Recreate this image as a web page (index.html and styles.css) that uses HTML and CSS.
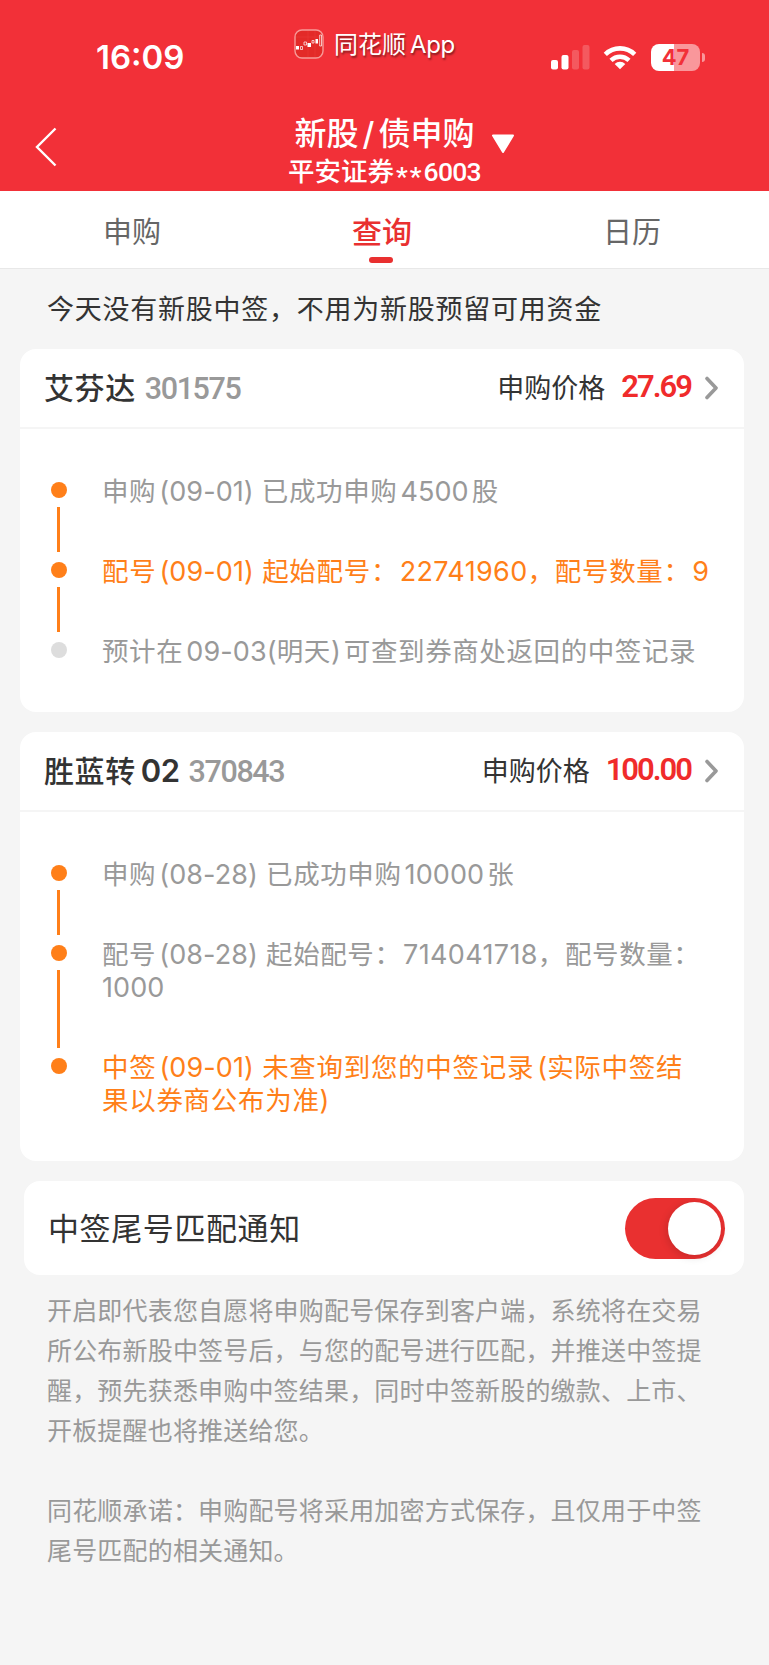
FILE: index.html
```html
<!DOCTYPE html>
<html lang="zh-CN">
<head>
    <meta charset="UTF-8">
    <meta name="viewport" content="width=device-width, initial-scale=1.0">
    <title>新股/债申购</title>
    <link rel="stylesheet" href="styles.css">
</head>
<body>
    <header class="header">
        <div class="status-bar">
            <div class="time">16:09</div>
            <div class="app-tag">
                <svg class="app-icon" width="30" height="30" viewBox="0 0 30 30">
                    <rect x="1" y="1" width="28" height="28" rx="7" fill="#e32a28" stroke="#f79a98" stroke-width="1.4"/>
                    <path d="M2 8h26M14 2v26M21 2v26" stroke="#ea3c3a" stroke-width=".5"/>
                    <path d="M2 17h3v3.500H2zM13.500 14h3.500v4h-3.500zM21.500 10h2.500v4.500h-2.500z" fill="#fff"/>
                    <path d="M6.500 17.500h2v3h-2zM10 13h2.500v3H10zM18 11.500h2v2.500h-2zM25.700 6h1.800v11h-1.800z" fill="none" stroke="#fff" stroke-width=".7"/>
                </svg>
                <span class="app-name">同花顺<span class="latin">App</span></span>
            </div>
            <div class="status-icons">
                <svg width="39" height="25" viewBox="0 0 39 25" fill="#fff">
                    <rect x="0" y="15" width="7" height="9.500" rx="2"/>
                    <rect x="10.500" y="10" width="7" height="14.500" rx="2"/>
                    <rect x="21" y="5" width="7" height="19.500" rx="2" opacity=".2"/>
                    <rect x="31.500" y="0" width="7" height="24.500" rx="2" opacity=".2"/>
                </svg>
                <svg class="wifi" width="34" height="25" viewBox="0 0 34 25" fill="none" stroke="#fff">
                    <path d="M2.300 9.400a21 21 0 0 1 29.400 0" stroke-width="4.600"/>
                    <path d="M8 15.400a13 13 0 0 1 18 0" stroke-width="4.400"/>
                    <path d="M17 24.300l-5.300-5.400a7.600 7.600 0 0 1 10.600 0z" fill="#fff" stroke="none"/>
                </svg>
                <div class="battery">47</div>
            </div>
        </div>
        <div class="nav">
            <svg class="back" width="24" height="42" viewBox="0 0 24 42">
                <path d="M21.500 2.500L3 21l18.500 18.500" fill="none" stroke="#fff" stroke-width="2.400"/>
            </svg>
            <div class="nav-title">
                <h1>新股<span class="slash">/</span>债申购</h1>
                <p>平安证券<span class="account"><span class="star">**</span>6003</span></p>
            </div>
            <svg class="dropdown" width="24" height="20" viewBox="0 0 24 20">
                <path d="M2 1.500h20L12 18z" fill="#fff" stroke="#fff" stroke-width="2" stroke-linejoin="round"/>
            </svg>
        </div>
    </header>

    <nav class="tabs">
        <div class="tab">申购</div>
        <div class="tab active">查询</div>
        <div class="tab">日历</div>
    </nav>

    <main class="content">
        <p class="notice">今天没有新股中签，不用为新股预留可用资金</p>

        <section class="card">
            <div class="card-header">
                <h2>艾芬达</h2>
                <span class="code">301575</span>
                <span class="price-label">申购价格</span>
                <span class="price">27.69</span>
                <svg class="arrow" width="15" height="24" viewBox="0 0 15 24">
                    <path d="M3 2.500l9 9.500-9 9.500" fill="none" stroke="#999" stroke-width="3.600" stroke-linecap="round" stroke-linejoin="round"/>
                </svg>
            </div>
            <ul class="timeline">
                <li class="step done"><p>申购<span class="num">(09-01)</span> 已成功申购<span class="num">4500</span><span class="after">股</span></p></li>
                <li class="step done current"><p>配号<span class="num">(09-01)</span> 起始配号：<span class="serial">22741960</span>，配号数量：<span class="serial">9</span></p></li>
                <li class="step"><p>预计在<span class="num">09-03(</span>明天<span class="digits">)</span><span class="after">可</span>查到券商处返回的中签记录</p></li>
            </ul>
        </section>

        <section class="card">
            <div class="card-header">
                <h2>胜蓝转<span class="latin">02</span></h2>
                <span class="code">370843</span>
                <span class="price-label">申购价格</span>
                <span class="price">100.00</span>
                <svg class="arrow" width="15" height="24" viewBox="0 0 15 24">
                    <path d="M3 2.500l9 9.500-9 9.500" fill="none" stroke="#999" stroke-width="3.600" stroke-linecap="round" stroke-linejoin="round"/>
                </svg>
            </div>
            <ul class="timeline">
                <li class="step done"><p>申购<span class="num">(08-28)</span> 已成功申购<span class="num">10000</span><span class="after">张</span></p></li>
                <li class="step done"><p>配号<span class="num">(08-28)</span> 起始配号：<span class="serial">714041718</span>，配号数量：<br><span class="digits">1000</span></p></li>
                <li class="step done current"><p>中签<span class="num">(09-01)</span> 未查询到您的中签记录<span class="num">(</span>实际中签结<br>果以券商公布为准<span class="digits">)</span></p></li>
            </ul>
        </section>

        <section class="switch-card">
            <span class="switch-label">中签尾号匹配通知</span>
            <div class="switch"><div class="knob"></div></div>
        </section>

        <div class="tips">
            <p>开启即代表您自愿将申购配号保存到客户端，系统将在交易<br>所公布新股中签号后，与您的配号进行匹配，并推送中签提<br>醒，预先获悉申购中签结果，同时中签新股的缴款、上市、<br>开板提醒也将推送给您。</p>
            <p>同花顺承诺：申购配号将采用加密方式保存，且仅用于中签<br>尾号匹配的相关通知。</p>
        </div>
    </main>
</body>
</html>
```

FILE: styles.css
```css
* {
    box-sizing: border-box;
    margin: 0;
    padding: 0;
}
body {
    min-height: 1665px;
    background-color: #f5f5f5;
    color: #333333;
    font-family: "Inter", "Noto Sans CJK SC", sans-serif;
    white-space: nowrap;
}
svg {
    display: block;
}

/* header */
.header {
    height: 191px;
    background-color: #f23038;
    color: #ffffff;
    overflow: hidden;
}
.status-bar {
    display: flex;
    align-items: flex-start;
    height: 110px;
}
.time {
    width: 198px;
    margin: 37px 0 0 96px;
    font-size: 33px;
    font-weight: 600;
    line-height: 40px;
    letter-spacing: 0;
}
.app-tag {
    display: flex;
    align-items: center;
    width: 257px;
    height: 30px;
    margin-top: 29px;
}
.app-name {
    padding-top: 2px;
    margin-left: 10px;
    font-size: 24px;
    line-height: 30px;
    text-shadow: 1px 2px 2px rgba(0, 0, 0, 0.45);
}
.app-name .latin {
    margin-left: 4px;
    letter-spacing: -0.4px;
}
.status-icons {
    display: flex;
    align-items: center;
    height: 27px;
    margin-top: 44px;
}
.wifi {
    margin-left: 13px;
}
.battery {
    position: relative;
    width: 49px;
    height: 27px;
    margin-left: 14px;
    border-radius: 8px;
    background: linear-gradient(to right, #ffffff 23px, #f9979b 23px);
    color: #f23038;
    font-size: 22px;
    font-weight: 700;
    line-height: 27px;
    text-align: center;
}
.battery::after {
    content: "";
    position: absolute;
    top: 9px;
    right: -5px;
    width: 3px;
    height: 9px;
    border-radius: 0 4px 4px 0;
    background-color: #f9979b;
}
.nav {
    display: grid;
    grid-template-columns: 1fr 196px 1fr;
    height: 81px;
}
.back {
    margin: 16px 0 0 34px;
}
.nav-title {
    text-align: center;
}
.nav-title h1 {
    padding-top: 1px;
    font-size: 32px;
    font-weight: 500;
    line-height: 46px;
}
.slash {
    margin: 0 4px;
}
.nav-title p {
    font-size: 26.5px;
    font-weight: 500;
    line-height: 28px;
}
.account {
    font-family: "Roboto", sans-serif;
    letter-spacing: -0.7px;
}
.star {
    position: relative;
    top: 4px;
    margin-left: 2px;
    letter-spacing: 2px;
}
.dropdown {
    margin: 24px 0 0 8px;
}

/* tabs */
.tabs {
    display: grid;
    grid-template-columns: repeat(3, 250px);
    height: 78px;
    padding-left: 7px;
    border-bottom: 1px solid #e8e8e8;
    background-color: #ffffff;
}
.tab {
    position: relative;
    color: #666666;
    font-size: 29px;
    line-height: 84px;
    text-align: center;
}
.tab.active {
    color: #e93030;
    font-size: 30px;
    font-weight: 500;
    line-height: 82px;
}
.tab.active::after {
    content: "";
    position: absolute;
    left: 112px;
    top: 66px;
    width: 24px;
    height: 6px;
    border-radius: 3px;
    background-color: #e93030;
}

/* content */
.notice {
    height: 80px;
    padding-left: 47px;
    font-size: 27px;
    letter-spacing: 0.75px;
    line-height: 81px;
}
.card {
    width: 724px;
    margin: 0 0 20px 20px;
    border-radius: 16px;
    background-color: #ffffff;
}
.card-header {
    display: flex;
    align-items: center;
    height: 80px;
    padding: 0 25px 0 24px;
    border-bottom: 2px solid #f5f5f5;
}
.card-header h2 {
    padding-bottom: 4px;
    font-size: 30px;
    font-weight: 500;
    letter-spacing: 0.6px;
}
.card-header h2 .latin {
    margin-left: 5px;
    font-size: 31px;
    font-weight: 600;
    letter-spacing: -0.5px;
}
.code {
    margin: 0 auto 0 9px;
    color: #999999;
    font-family: "Roboto", sans-serif;
    font-size: 30.5px;
    font-weight: 500;
    letter-spacing: -1.4px;
}
.price-label {
    padding-bottom: 4px;
    font-size: 27px;
}
.price {
    padding-bottom: 4px;
    margin-left: 16px;
    color: #f02b2b;
    font-family: "Roboto", sans-serif;
    font-size: 31px;
    font-weight: 600;
    letter-spacing: -2px;
}
.arrow {
    margin-left: 13px;
}
.timeline {
    padding: 45px 0 45px 34px;
    list-style: none;
}
.step {
    position: relative;
    padding: 0 0 47px 48px;
    color: #999999;
    font-size: 26.5px;
    letter-spacing: 0.6px;
    line-height: 33px;
}
.step p {
    position: relative;
    top: 1px;
}
.step:last-child {
    padding-bottom: 0;
}
.step::before {
    content: "";
    position: absolute;
    left: -3px;
    top: 8px;
    width: 16px;
    height: 16px;
    border-radius: 50%;
    background-color: #dddddd;
}
.step.done::before {
    background-color: #ff7f19;
}
.step:not(:last-child)::after {
    content: "";
    position: absolute;
    left: 3px;
    top: 33px;
    bottom: 2px;
    width: 3px;
    background-color: #ff7f19;
}
.step.current {
    color: #ff7f19;
    letter-spacing: 0.7px;
}
.num,
.digits,
.serial {
    font-size: 27px;
    letter-spacing: 0.1px;
}
.num {
    margin-left: 3px;
}
.serial {
    margin-left: 1.5px;
    letter-spacing: 0.35px;
}
.after {
    margin-left: 3px;
}

/* notification switch */
.switch-card {
    display: flex;
    align-items: center;
    justify-content: space-between;
    width: 720px;
    height: 94px;
    margin-left: 24px;
    padding: 0 19px 0 24px;
    border-radius: 16px;
    background-color: #ffffff;
}
.switch-label {
    padding-bottom: 4px;
    font-size: 31px;
    letter-spacing: 0.6px;
}
.switch {
    width: 100px;
    height: 61px;
    padding: 4px;
    border-radius: 31px;
    background-color: #e93030;
}
.knob {
    width: 53px;
    height: 53px;
    margin-left: auto;
    border-radius: 50%;
    background-color: #ffffff;
    box-shadow: -1px 2px 8px rgba(0, 0, 0, 0.15);
}
.tips {
    padding: 16px 0 0 47px;
    color: #999999;
    font-size: 25px;
    letter-spacing: 0.18px;
    line-height: 40px;
}
.tips p + p {
    margin-top: 40px;
}
```
